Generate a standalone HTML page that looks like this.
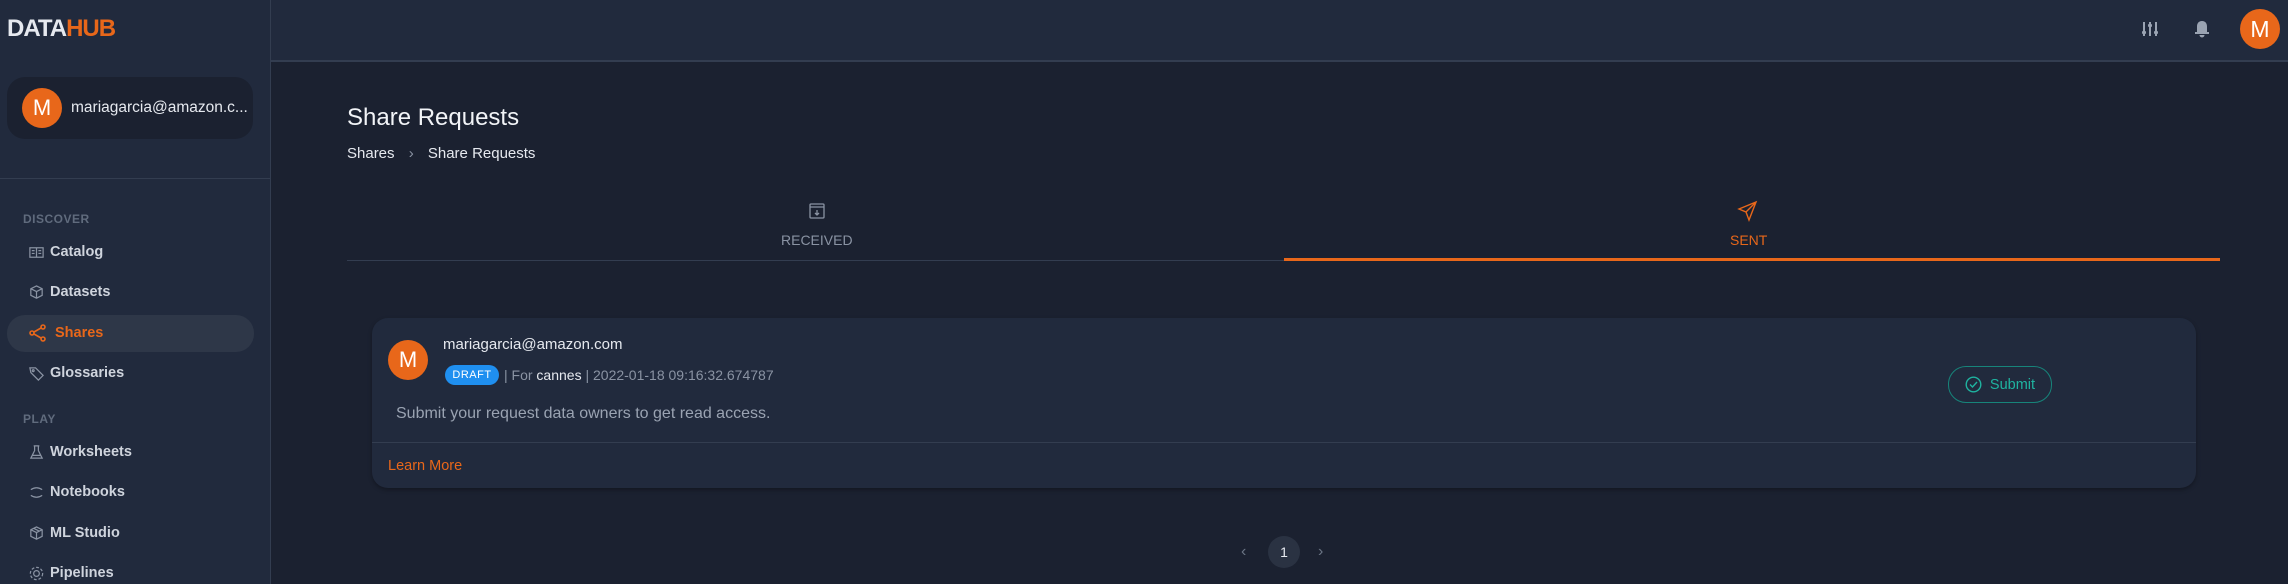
<!DOCTYPE html>
<html><head><meta charset="utf-8"><style>
*{margin:0;padding:0;box-sizing:border-box}
body{width:2288px;height:584px;overflow:hidden;background:#1b2130;font-family:"Liberation Sans",sans-serif;position:relative;color:#e6e9ef}
.a{position:absolute}
.side{left:0;top:0;width:271px;height:584px;background:#212a3d;border-right:1px solid #333d50}
.top{left:271px;top:0;width:2017px;height:62px;background:#212a3d;border-bottom:2px solid #333d50}
.av{border-radius:50%;background:#e8671a;color:#fff;display:flex;align-items:center;justify-content:center;font-size:22px}
.nav{left:50px;font-size:14.5px;font-weight:bold;color:#cfd4dd}
.ic{left:28px;width:17px;height:17px}
.sec{left:23px;font-size:12px;font-weight:bold;color:#606b7d;letter-spacing:.5px}
</style></head><body>
<div class="a side"></div>
<div class="a top"></div>
<div class="a" style="left:7px;top:15px;font-size:24px;font-weight:bold;letter-spacing:-1px">DATA<span style="color:#e8671a">HUB</span></div>
<div class="a" style="left:7px;top:77px;width:246px;height:62px;border-radius:18px;background:#1b2130"></div>
<div class="a av" style="left:22px;top:88px;width:40px;height:40px">M</div>
<div class="a" style="left:71px;top:99px;font-size:15.5px;color:#e6e9ef">mariagarcia@amazon.c...</div>
<div class="a" style="left:0;top:178px;width:270px;height:1px;background:#333d50"></div>
<div class="a sec" style="top:212px">DISCOVER</div>
<div class="a" style="left:7px;top:315px;width:247px;height:37px;border-radius:18px;background:#2e3748"></div>
<svg class="a ic" style="top:244px" viewBox="0 0 18 18" fill="none" stroke="#8a93a3" stroke-width="1.3"><rect x="2" y="4" width="14" height="10"/><path d="M9 4v10M4 7h3M4 10h3M11 7h3M11 10h3"/></svg>
<div class="a nav" style="top:244px">Catalog</div>
<svg class="a ic" style="top:284px" viewBox="0 0 18 18" fill="none" stroke="#8a93a3" stroke-width="1.3"><path d="M9 2l6 3v7l-6 3-6-3V5zM3 5l6 3 6-3M9 8v7"/></svg>
<div class="a nav" style="top:284px">Datasets</div>
<svg class="a" style="left:28px;top:323px;width:20px;height:20px" viewBox="0 0 20 20" fill="none" stroke="#e8671a" stroke-width="1.6"><circle cx="15" cy="4" r="2"/><circle cx="4" cy="10" r="2"/><circle cx="15" cy="16" r="2"/><path d="M6 9l7-4M6 11l7 4"/></svg>
<div class="a nav" style="left:55px;top:325px;color:#e8671a">Shares</div>
<svg class="a ic" style="top:365px" viewBox="0 0 18 18" fill="none" stroke="#8a93a3" stroke-width="1.3"><path d="M2 3h6l8 8-5 5-8-8z"/><circle cx="5.5" cy="6" r="1"/></svg>
<div class="a nav" style="top:365px">Glossaries</div>
<div class="a sec" style="top:412px">PLAY</div>
<svg class="a ic" style="top:444px" viewBox="0 0 18 18" fill="none" stroke="#8a93a3" stroke-width="1.3"><path d="M6 2h6M7 2v5l-4 8h12l-4-8V2M4 12h10"/></svg>
<div class="a nav" style="top:444px">Worksheets</div>
<svg class="a ic" style="top:484px" viewBox="0 0 18 18" fill="none" stroke="#8a93a3" stroke-width="1.3"><path d="M3 6q6-4 12 0M3 12q6 4 12 0"/></svg>
<div class="a nav" style="top:484px">Notebooks</div>
<svg class="a ic" style="top:525px" viewBox="0 0 18 18" fill="none" stroke="#8a93a3" stroke-width="1.3"><path d="M9 2l6 3v7l-6 3-6-3V5zM3 5l6 3 6-3M9 8v7M6 3.5l6 3"/></svg>
<div class="a nav" style="top:525px">ML Studio</div>
<svg class="a ic" style="top:565px" viewBox="0 0 18 18" fill="none" stroke="#8a93a3" stroke-width="1.3"><circle cx="9" cy="9" r="3"/><circle cx="9" cy="9" r="6.5" stroke-dasharray="3 2"/></svg>
<div class="a nav" style="top:565px">Pipelines</div>
<svg class="a" style="left:2140px;top:19px;width:20px;height:20px" viewBox="0 0 20 20" fill="#9aa3b2"><rect x="3" y="3" width="2" height="14"/><rect x="9" y="3" width="2" height="14"/><rect x="15" y="3" width="2" height="14"/><rect x="2" y="12" width="4" height="3" rx="1"/><rect x="8" y="5" width="4" height="3" rx="1"/><rect x="14" y="12" width="4" height="3" rx="1"/></svg>
<svg class="a" style="left:2193px;top:19px;width:18px;height:20px" viewBox="0 0 18 20" fill="#9aa3b2"><path d="M9 2c-3.5 0-5 2.5-5 5.5V13H2v2h14v-2h-2V7.5C14 4.5 12.5 2 9 2zM6.5 16h5a2.5 2.5 0 0 1-5 0z"/></svg>
<div class="a av" style="left:2240px;top:9px;width:40px;height:40px;font-size:23px">M</div>
<div class="a" style="left:347px;top:104px;font-size:24px;color:#f2f4f7">Share Requests</div>
<div class="a" style="left:347px;top:145px;font-size:15px;color:#e6e9ef">Shares <span style="color:#8a93a3;margin:0 10px">›</span> Share Requests</div>
<svg class="a" style="left:808px;top:202px;width:18px;height:18px" viewBox="0 0 18 18" fill="none" stroke="#8a93a3" stroke-width="1.3"><rect x="2" y="2" width="14" height="14" rx="1"/><path d="M2 5h14M9 8v5M7 11l2 2 2-2"/></svg>
<div class="a" style="left:781px;top:232px;font-size:14px;color:#8a93a3">RECEIVED</div>
<svg class="a" style="left:1737px;top:200px;width:22px;height:22px" viewBox="0 0 22 22" fill="none" stroke="#e8671a" stroke-width="1.4"><path d="M19 2L2 9l7 3 3 8zM9 12l10-10"/></svg>
<div class="a" style="left:1730px;top:232px;font-size:14px;color:#e8671a">SENT</div>
<div class="a" style="left:347px;top:260px;width:1873px;height:1px;background:#333d50"></div>
<div class="a" style="left:1284px;top:258px;width:936px;height:3px;background:#e8671a"></div>
<div class="a" style="left:372px;top:318px;width:1824px;height:170px;border-radius:16px;background:#212a3d;box-shadow:0 2px 4px rgba(0,0,0,.3)"></div>
<div class="a av" style="left:388px;top:340px;width:40px;height:40px">M</div>
<div class="a" style="left:443px;top:336px;font-size:15px;color:#e6e9ef">mariagarcia@amazon.com</div>
<div class="a" style="left:445px;top:365px;width:54px;height:20px;border-radius:10px;background:#1f8ff0;color:#fff;font-size:11px;letter-spacing:.5px;display:flex;align-items:center;justify-content:center">DRAFT</div>
<div class="a" style="left:504px;top:367px;font-size:14px;color:#8a93a3">| For <span style="color:#e6e9ef">cannes</span> | 2022-01-18 09:16:32.674787</div>
<div class="a" style="left:396px;top:405px;font-size:16px;color:#9aa3b2">Submit your request data owners to get read access.</div>
<div class="a" style="left:372px;top:442px;width:1824px;height:1px;background:#333d50"></div>
<div class="a" style="left:388px;top:458px;font-size:14.5px;color:#e8671a">Learn More</div>
<div class="a" style="left:1948px;top:366px;width:104px;height:37px;border:1px solid #17847a;border-radius:18px;display:flex;align-items:center;justify-content:center;gap:8px;color:#1fb3a0;font-size:14.5px"><svg width="17" height="17" viewBox="0 0 17 17" fill="none" stroke="#1fb3a0" stroke-width="1.4"><circle cx="8.5" cy="8.5" r="7.3"/><path d="M5 8.5l2.5 2.5 4.5-5"/></svg>Submit</div>
<div class="a" style="left:1241px;top:543px;color:#6b7585;font-size:16px">‹</div>
<div class="a" style="left:1268px;top:536px;width:32px;height:32px;border-radius:50%;background:#2a3242;display:flex;align-items:center;justify-content:center;font-size:14px;color:#e6e9ef">1</div>
<div class="a" style="left:1318px;top:543px;color:#6b7585;font-size:16px">›</div>
</body></html>
